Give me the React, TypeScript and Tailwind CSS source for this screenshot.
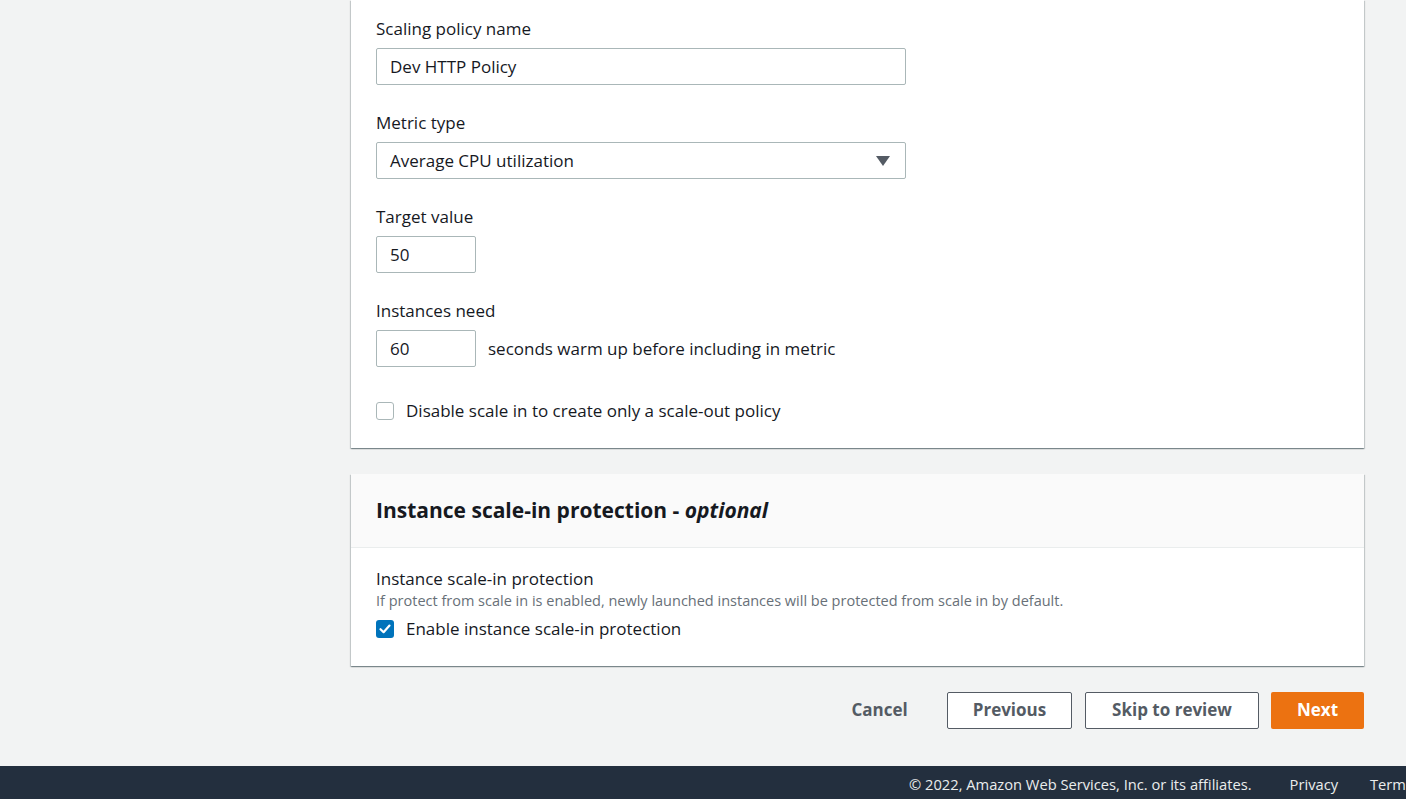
import React from "react";

function Field({ label, children }: { label: string; children: React.ReactNode }) {
  return (
    <div className="flex flex-col">
      <div className="text-[17px] leading-[22px] text-[#16191f] mb-[8px]">{label}</div>
      {children}
    </div>
  );
}

function Checkbox({ checked }: { checked?: boolean }) {
  return checked ? (
    <span className="w-[18px] h-[18px] rounded-[3px] bg-[#0073bb] flex items-center justify-center shrink-0">
      <svg width="14" height="14" viewBox="0 0 14 14">
        <path d="M2.5 7.2 L5.6 10.2 L11.5 3.6" fill="none" stroke="#fff" strokeWidth="2.2" strokeLinecap="round" strokeLinejoin="round" />
      </svg>
    </span>
  ) : (
    <span className="w-[18px] h-[18px] rounded-[3px] border border-[#aab7b8] bg-white shrink-0" />
  );
}

export default function App() {
  const input = "h-[37px] border border-[#aab7b8] rounded-[2px] bg-white px-[13px] flex items-center text-[17px] text-[#16191f]";
  const shadow = "shadow-[0_1px_1px_0_rgba(0,28,36,0.3),1px_1px_1px_0_rgba(0,28,36,0.15),-1px_1px_1px_0_rgba(0,28,36,0.15)]";
  return (
    <div className="min-h-[799px] bg-[#f2f3f3] flex flex-col overflow-hidden" style={{ fontFamily: '"Open Sans", sans-serif' }}>
      <div className="pl-[351px] pr-[42px] flex flex-col">
        {/* card 1 */}
        <div className={`bg-white ${shadow} pl-[25px] pt-[18px] pb-[26px] flex flex-col`}>
          <div className="flex flex-col gap-[27px]">
            <Field label="Scaling policy name">
              <div className={`${input} w-[530px]`}>Dev HTTP Policy</div>
            </Field>
            <Field label="Metric type">
              <div className={`${input} w-[530px] justify-between`}>
                <span>Average CPU utilization</span>
                <svg width="14" height="10" viewBox="0 0 14 10" className="mr-[2px]">
                  <path d="M0 0 H14 L7 10 Z" fill="#545b64" />
                </svg>
              </div>
            </Field>
            <Field label="Target value">
              <div className={`${input} w-[100px]`}>50</div>
            </Field>
            <Field label="Instances need">
              <div className="flex items-center">
                <div className={`${input} w-[100px]`}>60</div>
                <span className="ml-[12px] text-[17px] text-[#16191f]">seconds warm up before including in metric</span>
              </div>
            </Field>
          </div>
          <div className="flex items-center gap-[12px] mt-[33px] h-[22px]">
            <Checkbox />
            <span className="text-[17px] leading-[22px] text-[#16191f]">Disable scale in to create only a scale-out policy</span>
          </div>
        </div>

        {/* card 2 */}
        <div className={`mt-[26px] bg-white ${shadow} flex flex-col`}>
          <div className="h-[74px] bg-[#fafafa] border-b border-[#eaeded] pl-[25px] flex items-center">
            <h2 className="text-[21px] font-bold text-[#16191f]">
              Instance scale-in protection - <i className="font-bold">optional</i>
            </h2>
          </div>
          <div className="pl-[25px] pt-[20px] pb-[26px] flex flex-col">
            <div className="text-[17px] leading-[22px] text-[#16191f]">Instance scale-in protection</div>
            <div className="text-[14.5px] leading-[22px] text-[#687078]">
              If protect from scale in is enabled, newly launched instances will be protected from scale in by default.
            </div>
            <div className="flex items-center gap-[12px] mt-[6px] h-[22px]">
              <Checkbox checked />
              <span className="text-[17px] leading-[22px] text-[#16191f]">Enable instance scale-in protection</span>
            </div>
          </div>
        </div>

        {/* buttons */}
        <div className="mt-[26px] flex justify-end items-center h-[36px]">
          <button className="w-[95px] h-[36px] text-[17px] font-bold text-[#545b64]">Cancel</button>
          <button className="ml-[20px] w-[125px] h-[37px] border border-[#545b64] rounded-[2px] bg-white text-[17px] font-bold text-[#545b64]">Previous</button>
          <button className="ml-[13px] w-[174px] h-[37px] border border-[#545b64] rounded-[2px] bg-white text-[17px] font-bold text-[#545b64]">Skip to review</button>
          <button className="ml-[12px] w-[93px] h-[37px] rounded-[2px] bg-[#ec7211] text-[17px] font-bold text-white">Next</button>
        </div>
      </div>

      {/* footer */}
      <div className="mt-[38px] h-[36px] bg-[#232f3e] flex items-center pl-[909px] whitespace-nowrap text-[14.7px] text-[#eaeded]">
        <span>© 2022, Amazon Web Services, Inc. or its affiliates.</span>
        <span className="ml-[38px]">Privacy</span>
        <span className="ml-[32px]">Terms</span>
      </div>
    </div>
  );
}
